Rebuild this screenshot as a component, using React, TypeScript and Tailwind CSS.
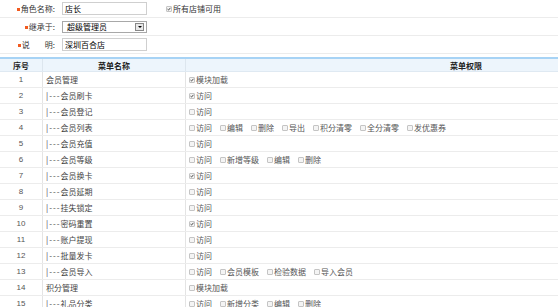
import React from "react";

type Perm = { label: string; checked?: boolean };
type Row = { no: number; name: string; child?: boolean; perms: Perm[] };

const rows: Row[] = [
  { no: 1, name: "会员管理", perms: [{ label: "模块加载", checked: true }] },
  { no: 2, name: "会员刷卡", child: true, perms: [{ label: "访问", checked: true }] },
  { no: 3, name: "会员登记", child: true, perms: [{ label: "访问" }] },
  {
    no: 4,
    name: "会员列表",
    child: true,
    perms: [
      { label: "访问" },
      { label: "编辑" },
      { label: "删除" },
      { label: "导出" },
      { label: "积分清零" },
      { label: "全分清零" },
      { label: "发优惠券" },
    ],
  },
  { no: 5, name: "会员充值", child: true, perms: [{ label: "访问" }] },
  {
    no: 6,
    name: "会员等级",
    child: true,
    perms: [{ label: "访问" }, { label: "新增等级" }, { label: "编辑" }, { label: "删除" }],
  },
  { no: 7, name: "会员换卡", child: true, perms: [{ label: "访问", checked: true }] },
  { no: 8, name: "会员延期", child: true, perms: [{ label: "访问" }] },
  { no: 9, name: "挂失锁定", child: true, perms: [{ label: "访问" }] },
  { no: 10, name: "密码重置", child: true, perms: [{ label: "访问", checked: true }] },
  { no: 11, name: "账户提现", child: true, perms: [{ label: "访问" }] },
  { no: 12, name: "批量发卡", child: true, perms: [{ label: "访问" }] },
  {
    no: 13,
    name: "会员导入",
    child: true,
    perms: [{ label: "访问" }, { label: "会员模板" }, { label: "检验数据" }, { label: "导入会员" }],
  },
  { no: 14, name: "积分管理", perms: [{ label: "模块加载" }] },
  {
    no: 15,
    name: "礼品分类",
    child: true,
    perms: [{ label: "访问" }, { label: "新增分类" }, { label: "编辑" }, { label: "删除" }],
  },
];

function Box({ checked }: { checked?: boolean }) {
  return (
    <span className="inline-flex w-[6px] h-[6px] border border-[#c4c4c4] bg-[#f4f4f4] rounded-[1px] items-center justify-center shrink-0">
      {checked && (
        <svg width="6" height="6" viewBox="0 0 6 6" className="block">
          <path d="M0.8 3.2 L2.3 4.6 L5.2 1.2" stroke="#222" strokeWidth="1.2" fill="none" />
        </svg>
      )}
    </span>
  );
}

function Marker() {
  return <span className="inline-block w-[3px] h-[3px] bg-[#f25a1f] mr-[1px] mb-[1px]" />;
}

export default function App() {
  return (
    <div
      className="w-[558px] h-[307px] overflow-hidden bg-white text-[8px] text-[#444]"
      style={{ fontFamily: '"Noto Sans CJK SC", "Noto Sans", sans-serif' }}
    >
      {/* form */}
      <div className="h-[18px] border-b border-[#ececec] flex items-center">
        <div className="w-[56px] text-right pr-[1px] text-[#333]">
          <Marker />角色名称:
        </div>
        <div className="ml-[6px] w-[85px] h-[13px] border border-[#cfcfcf] pl-[2px] leading-[11px] text-black">
          店长
        </div>
        <label className="ml-[19px] flex items-center gap-[1px] text-[#333]">
          <Box checked />所有店铺可用
        </label>
      </div>
      <div className="h-[18px] border-b border-[#ececec] flex items-center">
        <div className="w-[56px] text-right pr-[1px] text-[#333]">
          <Marker />继承于:
        </div>
        <div className="ml-[6px] w-[85px] h-[12px] border border-[#a8a8a8] flex items-center pl-[4px] text-black">
          <span className="flex-1 leading-[10px]">超级管理员</span>
          <span className="w-[9px] h-[8px] mr-[2px] border border-[#888] bg-[#e8e8e8] flex items-center justify-center">
            <span className="w-0 h-0 border-l-[2px] border-r-[2px] border-t-[2px] border-l-transparent border-r-transparent border-t-black" />
          </span>
        </div>
      </div>
      <div className="h-[18px] border-b border-[#ececec] flex items-center">
        <div className="w-[56px] text-right pr-[1px] text-[#333]">
          <Marker />说<span className="inline-block w-[15px]" />明:
        </div>
        <div className="ml-[6px] w-[85px] h-[13px] border border-[#cfcfcf] pl-[2px] leading-[11px] text-black">
          深圳百合店
        </div>
      </div>

      {/* table */}
      <div className="mt-[3px] w-[746px] border-t-2 border-[#a7d3f5]">
        <div className="flex h-[13px] bg-[#edf5fc] border-b border-[#dfe9f2] font-bold text-[#222] leading-[13px]">
          <div className="w-[43px] text-center border-r border-[#dde6ee]">序号</div>
          <div className="w-[143px] text-center border-r border-[#dde6ee]">菜单名称</div>
          <div className="flex-1 text-center">菜单权限</div>
        </div>
        {rows.map((r) => (
          <div key={r.no} className="flex h-[16px] border-b border-[#ececec] leading-[15px]">
            <div
              className="w-[43px] text-center border-r border-[#e4e4e4] text-[#555]"
              style={{ fontFamily: '"Liberation Sans", sans-serif' }}
            >
              {r.no}
            </div>
            <div className="w-[143px] pl-[3px] border-r border-[#e4e4e4] text-[#444]">
              {r.child && <span className="tracking-[1px]">|---</span>}
              {r.name}
            </div>
            <div className="flex-1 pl-[3px] flex items-center gap-[8px] text-[#555]">
              {r.perms.map((p) => (
                <span key={p.label} className="flex items-center gap-[1px]">
                  <Box checked={p.checked} />
                  {p.label}
                </span>
              ))}
            </div>
          </div>
        ))}
      </div>
    </div>
  );
}
